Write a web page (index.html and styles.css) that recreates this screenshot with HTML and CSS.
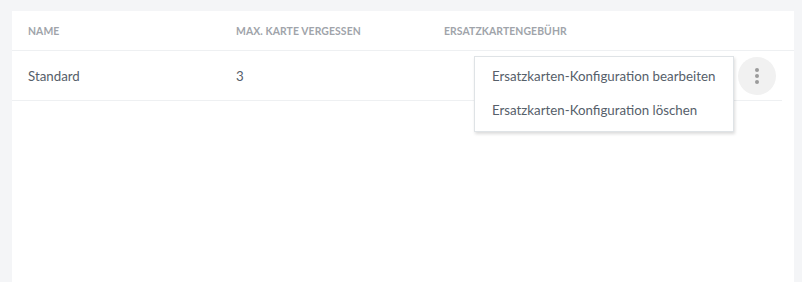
FILE: index.html
```html
<!DOCTYPE html>
<html lang="de">
<head>
<meta charset="utf-8">
<link rel="stylesheet" href="styles.css">
</head>
<body>
<div class="card">
  <div class="thead">
    <div class="th">Name</div>
    <div class="th">Max. Karte vergessen</div>
    <div class="th">Ersatzkartengebühr</div>
    <div class="th"></div>
  </div>
  <div class="row">
    <div class="td">Standard</div>
    <div class="td">3</div>
    <div class="td"></div>
    <div class="td actions">
      <button class="kebab" aria-label="Aktionen">
        <svg width="6" height="16" viewBox="0 0 6 16"><circle cx="3" cy="2" r="2"/><circle cx="3" cy="8" r="2"/><circle cx="3" cy="14" r="2"/></svg>
      </button>
    </div>
    <div class="menu">
      <div class="item">Ersatzkarten-Konfiguration bearbeiten</div>
      <div class="item">Ersatzkarten-Konfiguration löschen</div>
    </div>
  </div>
</div>
</body>
</html>
```
FILE: styles.css
```css
html, body {
  margin: 0;
  padding: 0;
  background: #f4f5f7;
  font-family: "Lato", "Open Sans", sans-serif;
}
body {
  padding: 11px 8px 0 12px;
  height: 282px;
  box-sizing: border-box;
  overflow: hidden;
  display: flex;
  flex-direction: column;
}
.card {
  background: #fff;
  flex: 1;
}
.thead {
  display: grid;
  grid-template-columns: 208px 208px 208px 1fr;
  padding-left: 16px;
  height: 39px;
  align-items: center;
  border-bottom: 1px solid #eef0f2;
}
.th {
  font-size: 10.4px;
  font-weight: 700;
  text-transform: uppercase;
  color: #a0a4aa;
  letter-spacing: 0.1px;
}
.row {
  position: relative;
  display: grid;
  grid-template-columns: 208px 208px 208px 1fr;
  padding-left: 16px;
  margin-right: 12px;
  height: 49px;
  align-items: center;
  border-bottom: 1px solid #eef0f2;
}
.td {
  font-size: 13.3px;
  color: #56606a;
}
.actions {
  display: flex;
  justify-content: flex-end;
  padding-right: 6px;
}
.kebab {
  width: 38px;
  height: 38px;
  border-radius: 50%;
  border: 0;
  background: #f1f1f1;
  display: flex;
  align-items: center;
  justify-content: center;
  padding: 0;
}
.kebab svg { fill: #9b9b9b; }
.menu {
  position: absolute;
  left: 462px;
  top: 5px;
  width: 258px;
  background: #fff;
  border: 1px solid #dfe3e6;
  box-shadow: 1px 2px 3px rgba(0,0,0,0.14);
  padding: 3px 0;
  z-index: 2;
}
.item {
  height: 34px;
  line-height: 33px;
  padding-left: 17px;
  font-size: 13.3px;
  color: #56606a;
  white-space: nowrap;
}
```
